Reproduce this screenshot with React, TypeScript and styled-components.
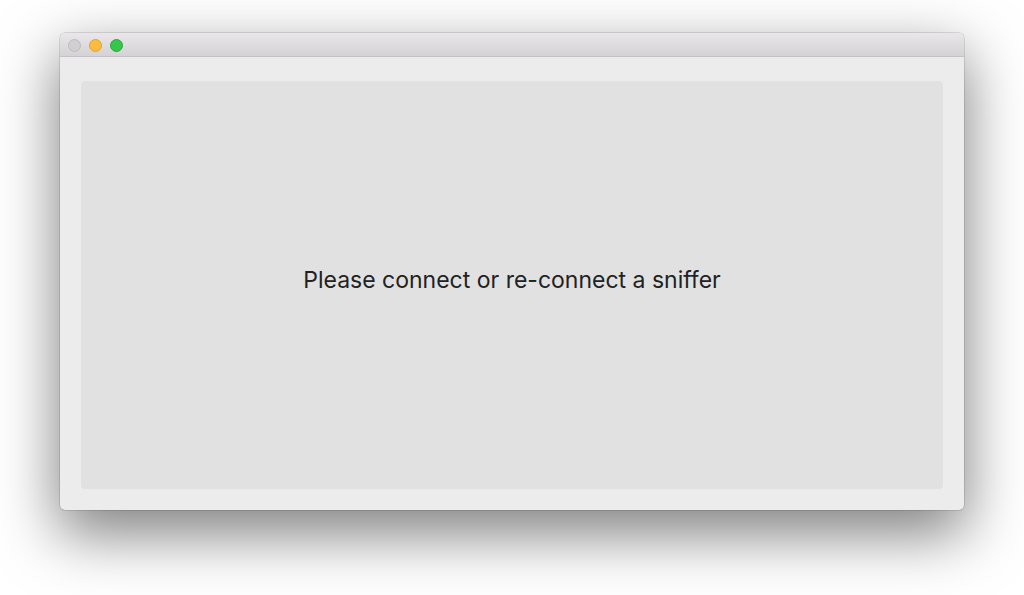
import React from "react";
import styled, { createGlobalStyle } from "styled-components";

const Global = createGlobalStyle`
  html, body { margin: 0; padding: 0; background: #ffffff; }
  body { font-family: Inter, "Noto Sans", "Liberation Sans", sans-serif; }
`;

const Page = styled.div`
  width: 1024px;
  height: 595px;
  padding: 33px 60px 0 60px;
  box-sizing: border-box;
  overflow: hidden;
`;

const Window = styled.div`
  width: 904px;
  height: 477px;
  display: flex;
  flex-direction: column;
  border-radius: 5px;
  overflow: hidden;
  background: #ececec;
  box-shadow: 0 22px 60px 2px rgba(0, 0, 0, 0.5), 0 0 0 0.5px rgba(0, 0, 0, 0.22);
`;

const TitleBar = styled.div`
  height: 21px;
  flex: none;
  display: flex;
  align-items: center;
  gap: 8px;
  padding: 2px 7px 0 8px;
  background: linear-gradient(#e9e7e9, #d4d2d4);
  border-bottom: 1px solid #c3c1c3;
`;

const Light = styled.span<{ $fill: string; $ring: string }>`
  width: 13px;
  height: 13px;
  box-sizing: border-box;
  border-radius: 50%;
  background: ${(p) => p.$fill};
  border: 0.5px solid ${(p) => p.$ring};
`;

const Body = styled.div`
  flex: 1;
  display: flex;
  padding: 24px 21px 21px 21px;
`;

const Panel = styled.div`
  flex: 1;
  display: flex;
  align-items: center;
  justify-content: center;
  background: #e1e1e1;
  border-radius: 4px;
  padding-bottom: 10px;
`;

const Message = styled.div`
  font-family: Inter, "Noto Sans", "Liberation Sans", sans-serif;
  font-size: 23px;
  color: #222222;
  letter-spacing: 0;
`;

export default function App() {
  return (
    <Page>
      <Global />
      <Window>
        <TitleBar>
          <Light $fill="#d1d0d1" $ring="#bdbcbd" />
          <Light $fill="#fdbc3f" $ring="#e0a235" />
          <Light $fill="#34c84a" $ring="#2aa63b" />
        </TitleBar>
        <Body>
          <Panel>
            <Message>Please connect or re-connect a sniffer</Message>
          </Panel>
        </Body>
      </Window>
    </Page>
  );
}
